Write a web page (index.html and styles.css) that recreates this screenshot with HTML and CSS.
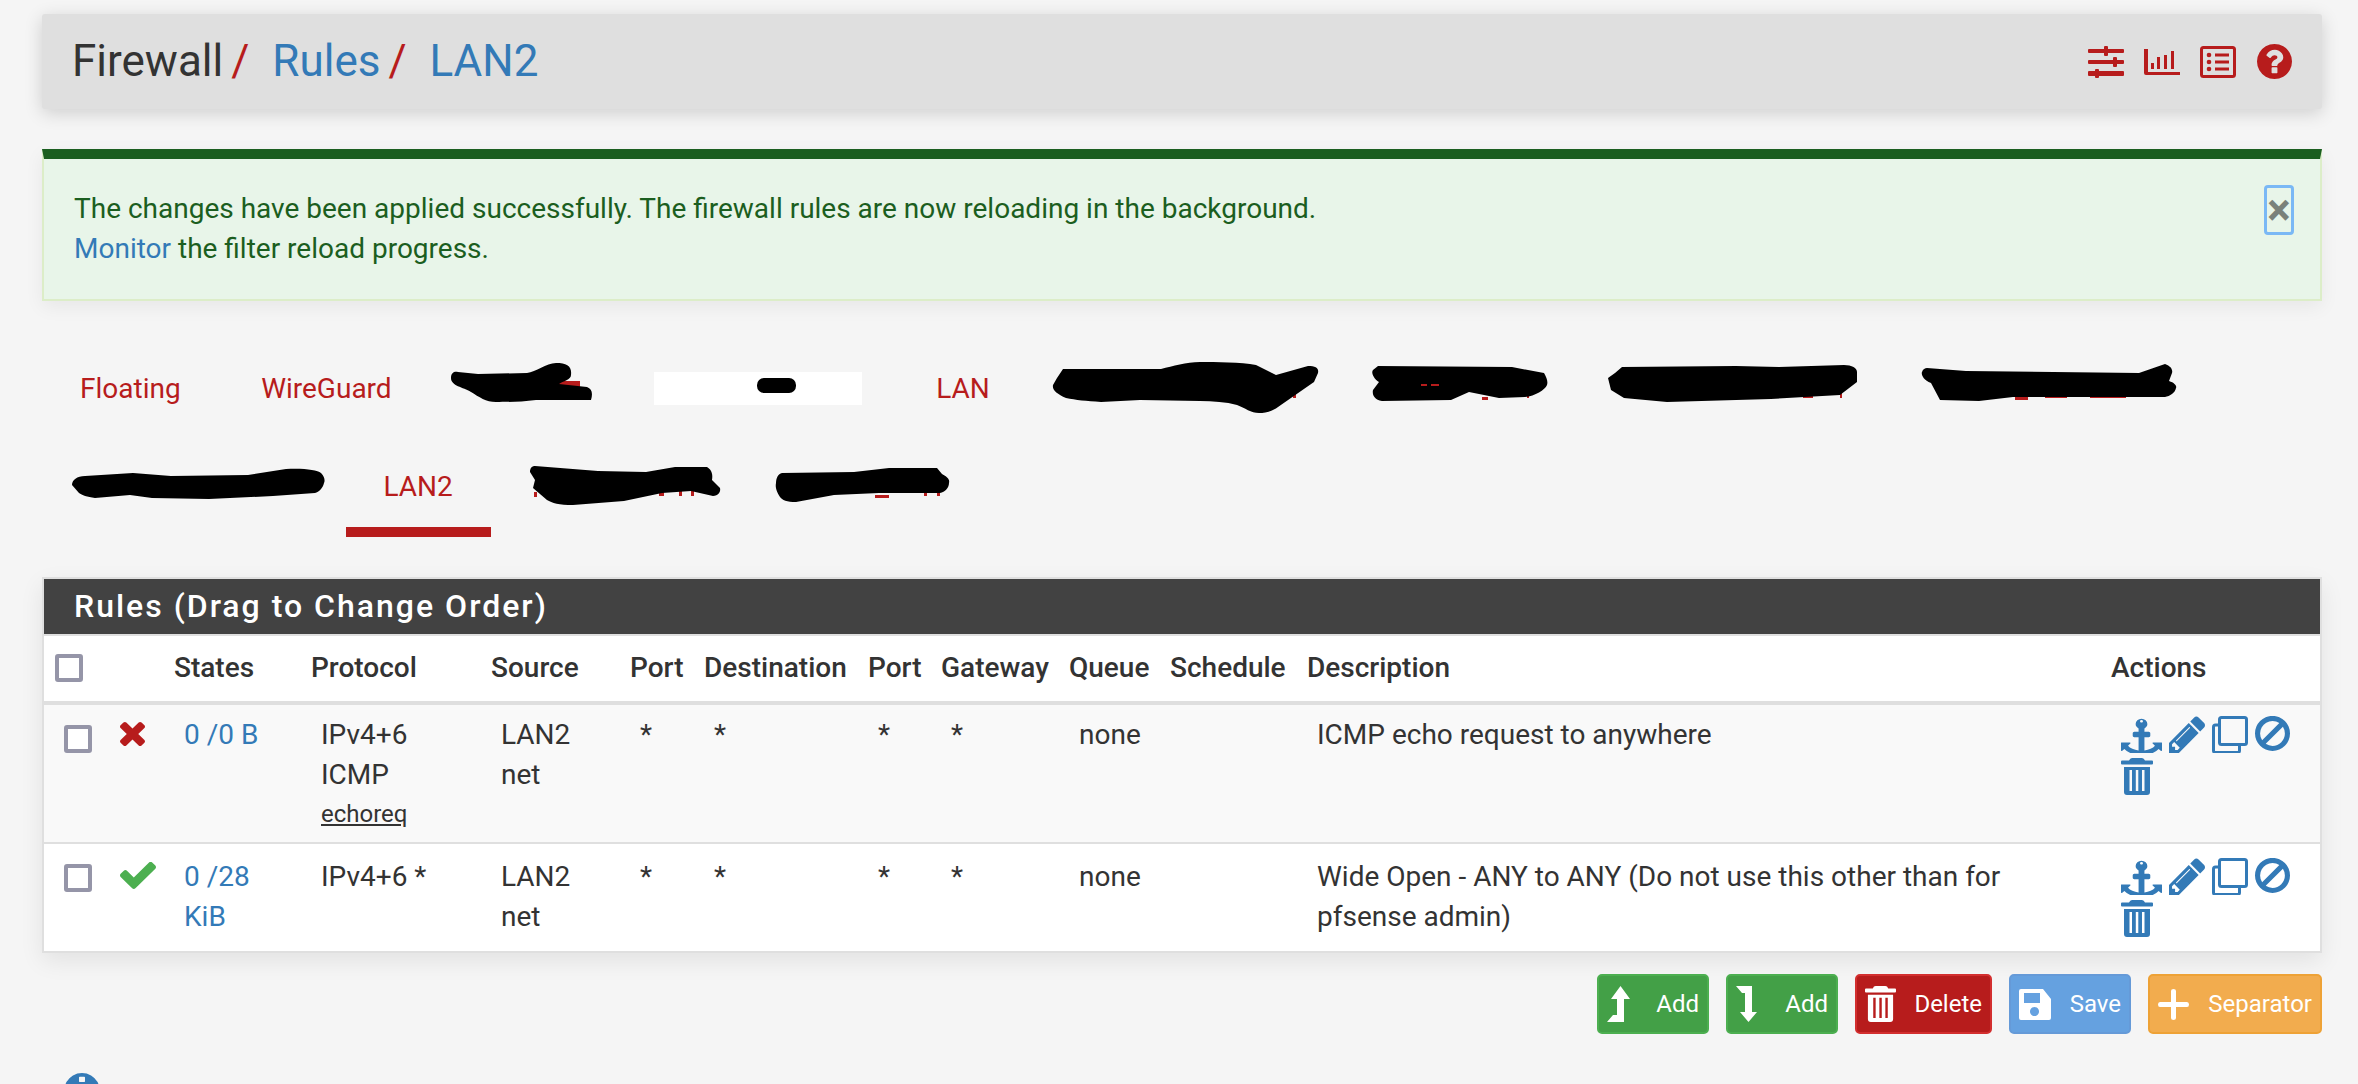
FILE: index.html
```html
<!DOCTYPE html>
<html lang="en">
<head>
  <meta charset="UTF-8" />
  <title>Firewall / Rules / LAN2</title>
  <link rel="stylesheet" href="styles.css">
</head>
<body>

  <!-- shared icons -->
  <svg class="sprite" aria-hidden="true">
    <symbol id="i-anchor" viewBox="0 0 1792 1792" preserveAspectRatio="none"><path d="M960 256q0-26-19-45t-45-19-45 19-19 45 19 45 45 19 45-19 19-45zm832 1056v352q0 22-20 30-8 2-12 2-12 0-23-9l-93-93q-119 143-318.5 226.5t-429.5 83.5-429.5-83.5-318.5-226.5l-93 93q-9 9-23 9-4 0-12-2-20-8-20-30v-352q0-14 9-23t23-9h352q22 0 30 20 8 19-7 35l-100 100q67 91 189.5 153.5t271.5 82.5v-647h-192q-26 0-45-19t-19-45v-128q0-26 19-45t45-19h192v-163q-58-34-93-92.5t-35-128.5q0-106 75-181t181-75 181 75 75 181q0 70-35 128.5t-93 92.5v163h192q26 0 45 19t19 45v128q0 26-19 45t-45 19h-192v647q149-20 271.5-82.5t189.5-153.5l-100-100q-15-16-7-35 8-20 30-20h352q14 0 23 9t9 23z"/></symbol>
    <symbol id="i-pencil" viewBox="128 128 1515 1536" preserveAspectRatio="none"><path d="M491 1536l91-91-235-235-91 91v107h128v128h107zm523-928q0-22-22-22-10 0-17 7l-542 542q-7 7-7 17 0 22 22 22 10 0 17-7l542-542q7-7 7-17zm-54-192l416 416-832 832h-416v-416zm683 96q0 53-37 90l-166 166-416-416 166-165q36-38 90-38 53 0 91 38l235 234q37 39 37 91z"/></symbol>
    <symbol id="i-copy" viewBox="0 0 36 37"><path d="M9.5 1.5h23a2 2 0 0 1 2 2v23a2 2 0 0 1-2 2h-23a2 2 0 0 1-2-2v-23a2 2 0 0 1 2-2z" fill="none" stroke="currentColor" stroke-width="3"/><path d="M7.5 9h-4a2 2 0 0 0-2 2v23.5a2 2 0 0 0 2 2h22a2 2 0 0 0 2-2v-6" fill="none" stroke="currentColor" stroke-width="3"/></symbol>
    <symbol id="i-ban" viewBox="128 128 1536 1536"><path d="M1440 893q0-161-87-295l-754 753q137 89 297 89 111 0 211.5-43.5t173.5-116.5 116-174.5 43-212.5zm-999 299l755-754q-135-91-300-91-148 0-273 73t-198 199-73 274q0 162 89 299zm1223-299q0 157-61 300t-163.5 246-245 164-298.5 61-298.5-61-245-164-163.5-246-61-300 61-299.5 163.5-245.5 245-164 298.5-61 298.5 61 245 164 163.5 245.5 61 299.5z"/></symbol>
    <symbol id="i-trash" viewBox="0 0 32 37"><path fill-rule="evenodd" d="M11 0h10q2 0 3 2.500h7q1 0 1 1v2q0 1-1 1h-30q-1 0-1-1v-2q0-1 1-1h7q1-2.500 3-2.500zM3 9h26v25q0 3-3 3h-20q-3 0-3-3zM8.500 12v21h2.500v-21zM14.800 12v21h2.500v-21zM21 12v21h2.500v-21z"/></symbol>
    <symbol id="i-times" viewBox="302 366 1188 1188" preserveAspectRatio="none"><path d="M1490 1322q0 40-28 68l-136 136q-28 28-68 28t-68-28l-294-294-294 294q-28 28-68 28t-68-28l-136-136q-28-28-28-68t28-68l294-294-294-294q-28-28-28-68t28-68l136-136q28-28 68-28t68 28l294 294 294-294q28-28 68-28t68 28l136 136q28 28 28 68t-28 68l-294 294 294 294q28 28 28 68z"/></symbol>
    <symbol id="i-check" viewBox="121 342 1550 1180" preserveAspectRatio="none"><path d="M1671 566q0 40-28 68l-724 724-136 136q-28 28-68 28t-68-28l-136-136-362-362q-28-28-28-68t28-68l136-136q28-28 68-28t68 28l294 295 656-657q28-28 68-28t68 28l136 136q28 28 28 68z"/></symbol>
  </svg>

  <header class="page-head">
    <h1 class="crumbs">
      <span>Firewall</span><i class="crumb-sep">/</i>
      <a href="#">Rules</a><i class="crumb-sep">/</i>
      <a href="#">LAN2</a>
    </h1>
    <div class="head-icons">
      <svg width="36" height="32" viewBox="0 0 36 32">
        <rect y="3" width="36" height="4" rx="1"/><rect x="16" width="4" height="10" rx="1"/>
        <rect y="14" width="36" height="4" rx="1"/><rect x="25" y="11" width="4" height="10" rx="1"/>
        <rect y="25" width="36" height="5" rx="1"/><rect x="7" y="23" width="4" height="9" rx="1"/>
      </svg>
      <svg width="36" height="32" viewBox="0 0 36 32">
        <path d="M0 3h4v23h32v3h-34q-2 0-2-2z"/>
        <rect x="7" y="17" width="3" height="6"/><rect x="13" y="11" width="3" height="12"/>
        <rect x="20" y="9" width="3" height="14"/><rect x="27" y="5" width="3" height="18"/>
      </svg>
      <svg width="36" height="32" viewBox="0 0 36 32">
        <rect x="1.500" y="1.500" width="33" height="29" rx="2" fill="none" stroke="currentColor" stroke-width="3"/>
        <circle cx="9" cy="9" r="2.300"/><circle cx="9" cy="16" r="2.300"/><circle cx="9" cy="23" r="2.300"/>
        <rect x="15" y="7.500" width="14" height="3"/><rect x="15" y="14.500" width="14" height="3"/><rect x="15" y="21.500" width="14" height="3"/>
      </svg>
      <svg class="help-icon" width="35" height="35" viewBox="128 128 1536 1536"><path d="M1024 1376v-192q0-14-9-23t-23-9h-192q-14 0-23 9t-9 23v192q0 14 9 23t23 9h192q14 0 23-9t9-23zm256-672q0-88-55.500-163t-138.500-116-170-41q-243 0-371 213-15 24 8 42l132 100q7 6 19 6 16 0 25-12 53-68 86-92 34-24 86-24 48 0 85.500 26t37.500 59q0 38-20 61t-68 45q-63 28-115.500 86.500t-52.500 125.500v36q0 14 9 23t23 9h192q14 0 23-9t9-23q0-19 21.500-49.500t54.500-49.500q32-18 49-28.500t46-35 44.500-48 28-60.500 12.500-81zm384 192q0 209-103 385.500t-279.500 279.500-385.500 103-385.500-103-279.500-279.500-103-385.500 103-385.500 279.500-279.500 385.500-103 385.500 103 279.500 279.500 103 385.500z"/></svg>
    </div>
  </header>

  <div class="alert">
    <p>The changes have been applied successfully. The firewall rules are now reloading in the background.<br><a href="#">Monitor</a> the filter reload progress.</p>
    <button class="alert-close">×</button>
  </div>

  <!-- tab names blacked out in the original -->
  <nav class="tabs">
    <a class="tab" href="#">Floating</a>
    <a class="tab" href="#">WireGuard</a>
    <a class="tab" href="#">
      <svg class="scribble" width="109" height="40" viewBox="471 368 109 40">
        <rect class="peek" x="543" y="381" width="36" height="8"/>
        <path d="M450 378C450 372 454 371 457 372L477 374 526 373C535 372 545 363 555 363 566 363 571 366 570 375 570 380 562 381 558 384L586 387C591 389 592 393 590 400L535 400C520 402 505 402 495 402 485 402 478 397 470 392 462 387 450 386 450 378Z"/>
      </svg>
    </a>
    <a class="tab" href="#">
      <svg class="scribble" width="194" height="40" viewBox="661 368 194 40">
        <rect x="653" y="372" width="208" height="33" fill="#fff"/>
        <rect x="756" y="378" width="39" height="15" rx="7"/>
      </svg>
    </a>
    <a class="tab" href="#">LAN</a>
    <a class="tab" href="#">
      <svg class="scribble" width="225" height="40" viewBox="1069 368 225 40">
        <rect class="peek" x="1292" y="394" width="3" height="4"/>
        <path d="M1062 369L1160 369C1172 366 1185 362 1199 362 1215 362 1240 362 1255 365L1275 375 1307 366C1315 366 1318 368 1317 373L1313 382 1277 407C1270 412 1264 413 1258 413 1250 413 1244 408 1236 405 1225 402 1212 401 1199 401L1139 400 1100 402C1085 401 1075 400 1065 398 1056 394 1051 390 1052 385L1056 378Z"/>
      </svg>
    </a>
    <a class="tab" href="#">
      <svg class="scribble" width="153" height="40" viewBox="1375 368 153 40">
        <rect class="peek" x="1481" y="397" width="6" height="3"/><rect class="peek" x="1526" y="393" width="2" height="5"/>
        <path d="M1377 366L1511 367 1543 373C1546 378 1547 382 1546 385 1544 390 1534 396 1524 397L1498 398 1468 392 1450 400 1381 401C1373 400 1371 394 1372 390L1378 382C1372 378 1370 372 1372 370Z"/>
        <rect class="peek" x="1420" y="384" width="6" height="2"/><rect class="peek" x="1430" y="384" width="8" height="2"/>
      </svg>
    </a>
    <a class="tab" href="#">
      <svg class="scribble" width="233" height="40" viewBox="1609 368 233 40">
        <rect class="peek" x="1803" y="396" width="10" height="2"/><rect class="peek" x="1840" y="393" width="2" height="5"/>
        <path d="M1622 367L1736 366 1779 367 1844 365C1852 365 1857 368 1857 372V382L1840 395 1771 399 1667 402 1624 398 1611 390 1608 378 1615 373Z"/>
      </svg>
    </a>
    <a class="tab" href="#">
      <svg class="scribble" width="237" height="40" viewBox="1923 368 237 40">
        <rect class="peek" x="2015" y="396" width="13" height="4"/><rect class="peek" x="2045" y="396" width="22" height="2"/><rect class="peek" x="2090" y="396" width="36" height="2"/>
        <path d="M1927 368L1966 371 2139 373 2165 364C2171 366 2173 370 2172 373L2169 381C2175 383 2177 386 2176 388 2175 393 2170 396 2165 397L2013 397 1979 401 1940 400 1931 383C1923 380 1921 374 1922 372 1923 369 1925 368 1927 368Z"/>
      </svg>
    </a>
    <a class="tab" href="#">
      <svg class="scribble" width="224" height="40" viewBox="81 466 224 40">
        <path d="M86 476L134 473 172 476 249 475 287 469C305 468 318 470 322 473 326 477 326 481 325 483 324 488 320 492 316 493L274 496 210 499 153 498 131 495 96 498C88 497 83 495 80 493L73 485C73 480 78 476 86 476Z"/>
      </svg>
    </a>
    <a class="tab tab-active" href="#">LAN2</a>
    <a class="tab" href="#">
      <svg class="scribble" width="162" height="40" viewBox="533 466 162 40">
        <rect class="peek" x="535" y="492" width="3" height="5"/><rect class="peek" x="660" y="490" width="5" height="6"/><rect class="peek" x="680" y="490" width="3" height="6"/><rect class="peek" x="692" y="490" width="3" height="6"/>
        <path d="M536 466L599 471 647 472 676 467 708 467C713 470 714 475 713 480L721 488C722 492 719 496 714 496L692 491 663 493 625 501 574 505C560 505 553 503 548 500L534 488 536 480 531 472C531 468 533 466 536 466Z"/>
      </svg>
    </a>
    <a class="tab" href="#">
      <svg class="scribble" width="167" height="40" viewBox="776 466 167 40">
        <rect class="peek" x="876" y="495" width="14" height="3"/><rect class="peek" x="925" y="490" width="3" height="6"/><rect class="peek" x="938" y="490" width="3" height="6"/>
        <path d="M783 473L855 472 890 468 938 468 943 474C949 477 951 480 950 483 950 488 946 492 941 493L880 493 835 495 797 502C788 502 783 500 781 497 778 492 776 488 777 483 777 478 779 474 783 473Z"/>
      </svg>
    </a>
  </nav>

  <section class="panel">
    <h2 class="panel-title">Rules (Drag to Change Order)</h2>
    <table class="rules">
      <colgroup>
        <col class="c-check"><col class="c-status"><col class="c-states"><col class="c-proto"><col class="c-source">
        <col class="c-port"><col class="c-dest"><col class="c-dport"><col class="c-gw"><col class="c-queue">
        <col class="c-sched"><col><col class="c-actions">
      </colgroup>
      <thead>
        <tr>
          <th><input type="checkbox" class="cb"></th>
          <th></th>
          <th>States</th>
          <th>Protocol</th>
          <th>Source</th>
          <th>Port</th>
          <th>Destination</th>
          <th>Port</th>
          <th>Gateway</th>
          <th>Queue</th>
          <th>Schedule</th>
          <th>Description</th>
          <th>Actions</th>
        </tr>
      </thead>
      <tbody>
        <tr class="row-tall">
          <td class="td-check"><input type="checkbox" class="cb"></td>
          <td class="td-status"><svg class="st-times"><use href="#i-times"/></svg></td>
          <td><a href="#">0 /0 B</a></td>
          <td>IPv4+6 ICMP<div class="subtype"><u>echoreq</u></div></td>
          <td>LAN2 net</td>
          <td>*</td>
          <td>*</td>
          <td>*</td>
          <td>*</td>
          <td>none</td>
          <td></td>
          <td>ICMP echo request to anywhere</td>
          <td>
            <div class="actions">
              <svg class="a-anchor"><use href="#i-anchor"/></svg>
              <svg class="a-icon"><use href="#i-pencil"/></svg>
              <svg class="a-icon"><use href="#i-copy"/></svg>
              <svg class="a-ban"><use href="#i-ban"/></svg>
              <svg class="a-trash"><use href="#i-trash"/></svg>
            </div>
          </td>
        </tr>
        <tr class="row-short">
          <td class="td-check"><input type="checkbox" class="cb"></td>
          <td class="td-status"><svg class="st-check"><use href="#i-check"/></svg></td>
          <td><a href="#">0 /28 KiB</a></td>
          <td>IPv4+6 *</td>
          <td>LAN2 net</td>
          <td>*</td>
          <td>*</td>
          <td>*</td>
          <td>*</td>
          <td>none</td>
          <td></td>
          <td>Wide Open - ANY to ANY (Do not use this other than for pfsense admin)</td>
          <td>
            <div class="actions">
              <svg class="a-anchor"><use href="#i-anchor"/></svg>
              <svg class="a-icon"><use href="#i-pencil"/></svg>
              <svg class="a-icon"><use href="#i-copy"/></svg>
              <svg class="a-ban"><use href="#i-ban"/></svg>
              <svg class="a-trash"><use href="#i-trash"/></svg>
            </div>
          </td>
        </tr>
      </tbody>
    </table>
  </section>

  <div class="btn-row">
    <button class="btn btn-green">
      <svg width="23" height="36" viewBox="1607 987 23 36"><path d="M1620.500 987L1630 1000H1624V1023H1607L1613 1016H1617V1000H1611Z"/></svg>
      <span>Add</span>
    </button>
    <button class="btn btn-green">
      <svg width="21" height="36" viewBox="1737 987 21 36"><path d="M1737 987H1753V1013H1758L1749.500 1023 1741 1013H1746V994H1743Z"/></svg>
      <span>Add</span>
    </button>
    <button class="btn btn-red">
      <svg width="31" height="36"><use href="#i-trash"/></svg>
      <span>Delete</span>
    </button>
    <button class="btn btn-blue">
      <svg width="32" height="31" viewBox="0 0 32 31"><path fill-rule="evenodd" d="M2 0h22l8 10v19q0 2-2 2h-28q-2 0-2-2v-27q0-2 2-2zM5 4v10h16v-10zM15.500 18a4.500 4.500 0 1 0 .01 0z"/></svg>
      <span>Save</span>
    </button>
    <button class="btn btn-orange">
      <svg width="31" height="31" viewBox="0 0 31 31"><path d="M13 2q0-2 2.500-2t2.500 2v11h11q2 0 2 2.500t-2 2.500h-11v11q0 2-2.500 2t-2.500-2v-11h-11q-2 0-2-2.500t2-2.500h11z"/></svg>
      <span>Separator</span>
    </button>
  </div>

  <svg class="info-icon" viewBox="128 128 1536 1536"><path d="M1152 1376v-160q0-14-9-23t-23-9h-96v-512q0-14-9-23t-23-9h-320q-14 0-23 9t-9 23v160q0 14 9 23t23 9h96v320h-96q-14 0-23 9t-9 23v160q0 14 9 23t23 9h448q14 0 23-9t9-23zm-128-896v-160q0-14-9-23t-23-9h-192q-14 0-23 9t-9 23v160q0 14 9 23t23 9h192q14 0 23-9t9-23zm640 416q0 209-103 385.500t-279.500 279.500-385.500 103-385.500-103-279.500-279.500-103-385.500 103-385.500 279.500-279.500 385.500-103 385.500 103 279.500 279.500 103 385.500z"/></svg>

</body>
</html>
```

FILE: styles.css
```css
html {
  height: 100%;
  overflow: hidden;
}

body {
  margin: 0;
  padding: 14px 36px 0 42px;
  font-family: Roboto, "Liberation Sans", sans-serif;
  font-size: 28px;
  line-height: 40px;
  color: #333;
  background-color: #f5f5f5;
}

a {
  color: #337ab7;
  text-decoration: none;
}

svg {
  display: block;
  fill: currentColor;
}

.sprite {
  display: none;
}

/* header bar */
.page-head {
  display: flex;
  justify-content: space-between;
  align-items: center;
  height: 95px;
  padding: 0 30px;
  background-color: #dfdfdf;
  border-radius: 3px;
  box-shadow: 0 4px 18px rgba(0, 0, 0, 0.16);
}

.crumbs {
  margin: 0 0 2px;
  font-size: 44px;
  font-weight: 400;
  line-height: 52px;
}

.crumb-sep {
  margin: 0 12px 0 8px;
  font-style: normal;
  color: #b71c1c;
}

.head-icons {
  display: flex;
  align-items: center;
  gap: 20px;
  color: #b71c1c;
}

.help-icon {
  margin-left: 1px;
}

/* alert */
.alert {
  display: flex;
  justify-content: space-between;
  align-items: flex-start;
  height: 152px;
  box-sizing: border-box;
  margin-top: 40px;
  padding: 0 26px 0 30px;
  color: #1b5e20;
  background-color: #e8f5e9;
  border: 2px solid #dcedc8;
  border-top: 10px solid #1b5e20;
  box-shadow: 0 6px 18px rgba(0, 0, 0, 0.06);
}

.alert p {
  margin: 30px 0 0;
}

.alert-close {
  width: 30px;
  height: 50px;
  margin-top: 26px;
  padding: 0;
  font-family: Roboto, sans-serif;
  font-size: 44px;
  font-weight: 700;
  line-height: 40px;
  color: #7a817a;
  background: none;
  border: 3px solid #7ab8f5;
  border-radius: 4px;
}

/* tabs */
.tabs {
  display: flex;
  flex-wrap: wrap;
  gap: 0 2.5px;
  margin: 40px 0 0 -1px;
}

.tab {
  padding: 28px 39px 20px;
  color: #b71c1c;
  border-bottom: 10px solid transparent;
}

.tab:has(.scribble) {
  padding-top: 27px;
  padding-bottom: 21px;
}

.tab-active {
  padding-left: 38px;
  padding-right: 38px;
  border-bottom-color: #b71c1c;
}

.scribble {
  overflow: visible;
  fill: #000;
}

.scribble .peek {
  fill: #b71c1c;
}

/* rules panel */
.panel {
  margin-top: 40px;
  background-color: #fff;
  border: 2px solid #dfdfdf;
  box-shadow: 0 8px 22px rgba(0, 0, 0, 0.08);
}

.panel-title {
  margin: 0;
  height: 55px;
  padding-left: 30px;
  font-size: 32px;
  font-weight: 500;
  line-height: 54px;
  letter-spacing: 2px;
  color: #fff;
  background-color: #424242;
}

.rules {
  width: 100%;
  table-layout: fixed;
  border-collapse: collapse;
}

.c-check { width: 64px; }
.c-status { width: 55px; }
.c-states { width: 137px; }
.c-proto { width: 180px; }
.c-source { width: 139px; }
.c-port { width: 74px; }
.c-dest { width: 164px; }
.c-dport { width: 73px; }
.c-gw { width: 128px; }
.c-queue { width: 101px; }
.c-sched { width: 137px; }
.c-actions { width: 220px; }

.rules th {
  height: 64px;
  padding: 0 0 1px 11px;
  font-weight: 500;
  text-align: left;
  white-space: nowrap;
  border-top: 2px solid #dfdfdf;
  border-bottom: 4px solid #dfdfdf;
}

.rules td {
  box-sizing: border-box;
  padding: 10px 12px 0 21px;
  vertical-align: top;
}

.row-tall td {
  height: 140px;
  background-color: #f9f9f9;
  border-bottom: 2px solid #dfdfdf;
}

.row-short td {
  height: 108px;
  padding-top: 13px;
}

.rules .td-check {
  padding: 20px 0 0 20px;
}

.rules .td-status {
  padding: 17px 0 0 12px;
}

.row-short .td-status {
  padding-top: 18px;
}

.cb {
  display: block;
  appearance: none;
  width: 28px;
  height: 28px;
  margin: 0;
  background-color: #fff;
  border: 4px solid #9595a8;
  border-radius: 3px;
}

.st-times {
  width: 25px;
  height: 24px;
  color: #b71c1c;
}

.st-check {
  width: 36px;
  height: 27px;
  color: #4caf50;
}

.subtype {
  font-size: 24px;
  line-height: 38px;
}

.actions {
  display: flex;
  flex-wrap: wrap;
  gap: 5px 7px;
  width: 176px;
  margin-top: 1px;
  color: #337ab7;
}

.a-anchor {
  width: 41px;
  height: 37px;
}

.a-icon {
  width: 36px;
  height: 37px;
}

.a-ban {
  width: 35px;
  height: 35px;
}

.a-trash {
  width: 32px;
  height: 37px;
}

/* buttons */
.btn-row {
  display: flex;
  justify-content: flex-end;
  gap: 17px;
  margin-top: 21px;
}

.btn {
  display: flex;
  align-items: center;
  justify-content: space-between;
  height: 60px;
  box-sizing: border-box;
  padding: 0 8px;
  font-family: Roboto, sans-serif;
  font-size: 24px;
  color: #fff;
  border: 2px solid;
  border-radius: 5px;
}

.btn-green {
  background-color: #43a047;
  border-color: #4caf50;
  width: 112px;
  padding-right: 8px;
}

.btn-red {
  background-color: #b71c1c;
  border-color: #d32f2f;
  width: 137px;
}

.btn-blue {
  background-color: #65a1e0;
  border-color: #659ad8;
  width: 122px;
}

.btn-orange {
  background-color: #f2ac4e;
  border-color: #eea236;
  width: 174px;
}

.info-icon {
  width: 36px;
  height: 36px;
  margin: 39px 0 0 22px;
  color: #337ab7;
}
```
